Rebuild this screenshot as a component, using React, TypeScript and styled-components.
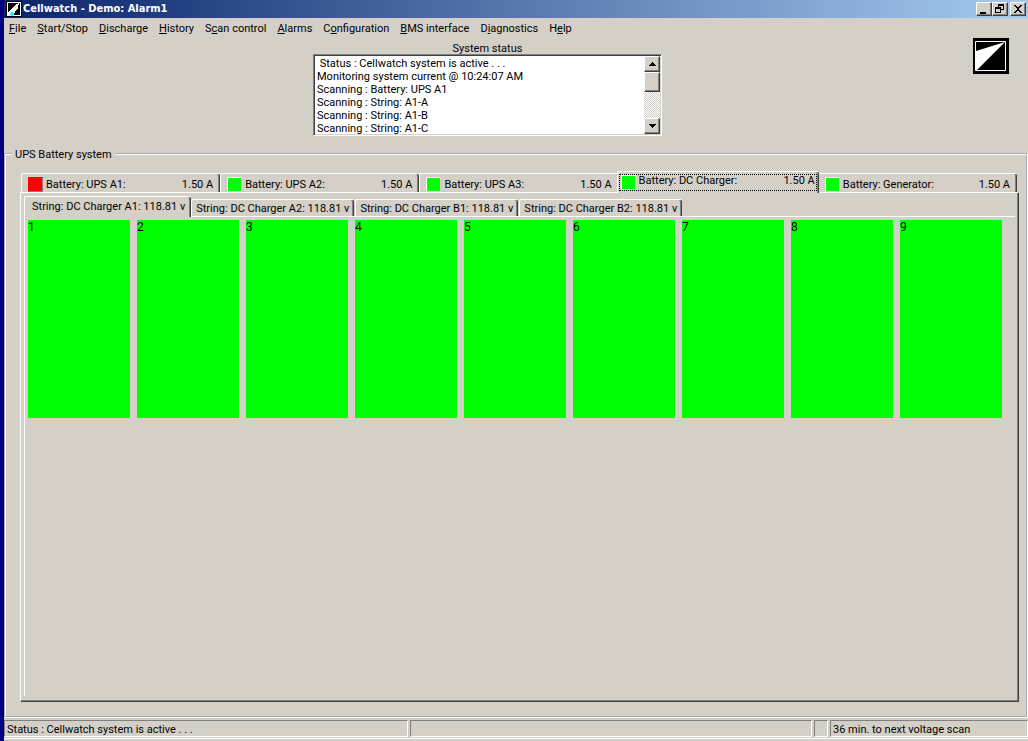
import React, { useState } from "react";
import styled, { createGlobalStyle, css } from "styled-components";

const face = "#d4d0c8";
const shadow = "#808080";
const dark = "#404040";
const titleFont = `"DejaVu Sans Condensed", Tahoma, sans-serif`;
const formFont = `Roboto, Arial, sans-serif`;

const GlobalStyle = createGlobalStyle`
  *, *::before, *::after { box-sizing: border-box; }
  body { margin: 0; background: ${face}; }
  button, textarea { font: inherit; color: inherit; margin: 0; padding: 0; border: 0; border-radius: 0; }
`;

const Frame = styled.div`
  min-height: 100vh;
  display: flex;
  flex-direction: column;
  border-left: 4px solid #000080;
  background: ${face};
  color: #000;
  font: 11px/13px ${formFont};
`;

const TitleBar = styled.header`
  display: flex;
  align-items: center;
  height: 18px;
  padding: 0 2px;
  background: linear-gradient(to right, #0a246a, #a6caf0);
`;

const Title = styled.h1`
  flex: 1;
  margin: 0 0 0 1px;
  color: #fff;
  font: bold 11px/16px ${titleFont};
`;

const raised = css`
  background: ${face};
  border: 1px solid;
  border-color: #fff ${dark} ${dark} #fff;
  box-shadow: inset -1px -1px ${shadow};
`;

const CaptionButton = styled.button<{ $apart?: boolean }>`
  ${raised}
  display: flex;
  width: 16px;
  height: 14px;
  margin-left: ${(p) => (p.$apart ? 2 : 0)}px;
`;

const MenuBar = styled.nav`
  display: flex;
  flex-wrap: wrap;
  gap: 11px;
  min-height: 20px;
  padding: 4px 5px 3px;
`;

const MenuItem = styled.button`
  background: none;
  white-space: nowrap;
`;

const Overview = styled.section`
  display: grid;
  grid-template-columns: 309px minmax(0, 349px) 1fr;
  min-height: 108px;
`;

const StatusField = styled.div`
  grid-column: 2;
  padding-top: 4px;
`;

const StatusLabel = styled.label`
  display: block;
  height: 12px;
  line-height: 14px;
  text-align: center;
`;

const ListBox = styled.div`
  display: flex;
  height: 82px;
  background: #fff;
  border: 1px solid;
  border-color: ${shadow} #fff #fff ${shadow};
  box-shadow: inset 1px 1px ${dark}, inset -1px -1px ${face};
  padding: 1px;
`;

const Log = styled.textarea`
  flex: 1;
  min-width: 0;
  padding: 1px 2px 0;
  background: transparent;
  line-height: 13px;
  resize: none;
  overflow: hidden;
  outline: none;
  white-space: pre;
`;

const ScrollBar = styled.div`
  display: flex;
  flex-direction: column;
  width: 16px;
  background: repeating-conic-gradient(#fff 0 25%, ${face} 0 50%) 0 0 / 2px 2px;
`;

const ScrollButton = styled.button`
  ${raised}
  display: flex;
  height: 16px;
`;

const Thumb = styled.div`
  ${raised}
  height: 20px;
  margin-bottom: auto;
`;

const Brand = styled.div`
  display: flex;
  justify-content: flex-end;
  padding-right: 19px;
`;

const GroupBox = styled.fieldset`
  min-width: 0;
  margin: 0;
  padding: 10px 7px 14px 14px;
  border: 2px groove #fff;
`;

const Legend = styled.legend`
  margin-left: -8px;
  padding: 2px 3px 0;
`;

const BatteryTabs = styled.div`
  display: grid;
  grid-template-columns: repeat(5, minmax(0, 1fr));
  align-items: end;
  padding: 0 2px 0 1px;
  height: 21px;
`;

const tabEdge = css`
  border: solid #fff;
  border-width: 1px 0 0 1px;
  border-radius: 2px 2px 0 0;
  box-shadow: inset -1px 0 ${dark}, inset -2px 0 ${shadow};
  background: ${face};
  white-space: nowrap;
`;

const BatteryTab = styled.button<{ $active: boolean }>`
  ${tabEdge}
  display: flex;
  align-items: center;
  height: 19px;
  padding: 2px 7px 0 6px;
  ${(p) =>
    p.$active &&
    css`
      position: relative;
      z-index: 1;
      height: 22px;
      margin: 0 -1px -1px -2px;
      padding: 2px 2px 2px 1px;
    `}
`;

const TabFace = styled.span<{ $active: boolean }>`
  flex: 1;
  display: flex;
  align-items: center;
  ${(p) =>
    p.$active &&
    css`
      height: 17px;
      padding: 0 1px;
      border: 1px dotted #000;
    `}
`;

const Lamp = styled.span<{ $alarm?: boolean }>`
  flex: none;
  width: 15px;
  height: 15px;
  margin-right: 3px;
  border: 1px solid;
  border-color: ${(p) => (p.$alarm ? `red ${shadow} ${shadow} red` : `#fff ${face} ${face} #fff`)};
  background: ${(p) => (p.$alarm ? "#f00" : "#0f0")};
`;

const TabText = styled.span<{ $raised: boolean; $end?: boolean }>`
  margin-left: ${(p) => (p.$end ? "auto" : "0")};
  padding-bottom: ${(p) => (p.$raised ? 4 : 0)}px;
`;

const BatteryPanel = styled.div`
  display: flex;
  flex-direction: column;
  min-height: calc(100vh - 231px);
  padding: 3px 3px 5px;
  border: 1px solid;
  border-color: #fff ${dark} ${dark} #fff;
  box-shadow: inset -1px -1px ${shadow};
`;

const StringTabs = styled.div`
  display: flex;
  align-items: flex-end;
  height: 21px;
  border-left: 1px solid #fff;
  box-shadow: inset 0 -1px #fff;
`;

const StringTab = styled.button<{ $active: boolean }>`
  ${tabEdge}
  height: 17px;
  margin: 0 1px 1px 0;
  padding: 1px 5px 0 4px;
  ${(p) =>
    p.$active &&
    css`
      height: 21px;
      margin: 0 0 0 -1px;
      padding: 0 6px 2px 7px;
    `}
`;

const Cells = styled.div`
  flex: 1;
  display: grid;
  grid-template-columns: repeat(9, 1fr);
  grid-auto-rows: 198px;
  gap: 7px;
  padding: 3px 13px 0 3px;
  border-left: 1px solid #fff;
`;

const Cell = styled.button`
  display: flex;
  background: #0f0;
  font-size: 12px;
  line-height: 14px;
`;

const StatusBar = styled.footer`
  display: grid;
  grid-template-columns: 404fr 402fr 14px 198fr;
  gap: 2px;
  height: 23px;
  padding: 2px 0 4px;
  box-shadow: inset 0 -2px ${face}, inset 0 -3px #fff;
`;

const StatusPane = styled.div`
  min-width: 0;
  padding: 2px 2px 0;
  border: 1px solid;
  border-color: ${shadow} #fff #fff ${shadow};
  white-space: nowrap;
  overflow: hidden;
`;

const Logo = ({ size }: { size: number }) => (
  <svg width={size} height={size} viewBox="0 0 36 36" aria-hidden="true">
    <path fill="#000" d="M0 0h36v36H0z" />
    <path fill="none" stroke="#fff" d="M2.500 3.500h30v29h-30z" />
    <path fill="#fff" d="M3 13 32 4 4 32H3z" />
  </svg>
);

const AppIcon = () => (
  <svg width="16" height="16" viewBox="0 0 16 16" aria-hidden="true" shapeRendering="crispEdges">
    <path fill="#000" d="M0 0h16v16H0z" />
    <path fill="none" stroke="#fff" d="M1.500 1.500h13v13h-13z" />
    <path fill="#fff" d="M2 14v-3l7-7 4-2-1 5-5 7z" />
    <path fill="#0ff" d="M5 11h2v1h1v2H7v1H5v-1H4v-2h1z" />
  </svg>
);

const glyphs = {
  minimize: "M3 9h6v2H3z",
  restore: "M5 1h6v6H8v3H2V4h3zM6 3v1h2v2h2V3zM3 6v3h4V6z",
  close: "M3 2h2v1h1v1h2V3h1V2h2v1h-1v1H9v1H8v2h1v1h1v1h1v1H9V9H8V8H6v1H5v1H3V9h1V8h1V7h1V5H5V4H4V3H3z",
  up: "M7 5h1v1h1v1h1v1h1v1H4V8h1V7h1V6h1z",
  down: "M4 5h7v1h-1v1H9v1H8v1H7V8H6V7H5V6H4z",
};

const Glyph = ({ name }: { name: keyof typeof glyphs }) => (
  <svg width="14" height="14" viewBox="0 0 14 14" aria-hidden="true" shapeRendering="crispEdges">
    <path fillRule="evenodd" d={glyphs[name]} />
  </svg>
);

// Each entry is [text before the access key, the access key, the rest].
const menus = [
  ["", "F", "ile"],
  ["", "S", "tart/Stop"],
  ["", "D", "ischarge"],
  ["", "H", "istory"],
  ["S", "c", "an control"],
  ["", "A", "larms"],
  ["C", "o", "nfiguration"],
  ["", "B", "MS interface"],
  ["D", "i", "agnostics"],
  ["H", "e", "lp"],
];

const batteries = ["UPS A1", "UPS A2", "UPS A3", "DC Charger", "Generator"];
const strings = ["A1", "A2", "B1", "B2"];
const log = [
  " Status : Cellwatch system is active . . .",
  "Monitoring system current @ 10:24:07 AM",
  "Scanning : Battery: UPS A1",
  "Scanning : String: A1-A",
  "Scanning : String: A1-B",
  "Scanning : String: A1-C",
].join("\n");

export default function App() {
  const [battery, setBattery] = useState(3);
  const [string, setString] = useState(0);

  return (
    <Frame>
      <GlobalStyle />
      <TitleBar>
        <AppIcon />
        <Title>Cellwatch - Demo: Alarm1</Title>
        <CaptionButton aria-label="Minimize"><Glyph name="minimize" /></CaptionButton>
        <CaptionButton aria-label="Restore"><Glyph name="restore" /></CaptionButton>
        <CaptionButton $apart aria-label="Close"><Glyph name="close" /></CaptionButton>
      </TitleBar>
      <MenuBar>
        {menus.map(([before, key, rest]) => (
          <MenuItem key={before + key + rest}>{before}<u>{key}</u>{rest}</MenuItem>
        ))}
      </MenuBar>
      <Overview>
        <StatusField>
          <StatusLabel htmlFor="log">System status</StatusLabel>
          <ListBox>
            <Log id="log" readOnly value={log} />
            <ScrollBar>
              <ScrollButton aria-label="Scroll up"><Glyph name="up" /></ScrollButton>
              <Thumb />
              <ScrollButton aria-label="Scroll down"><Glyph name="down" /></ScrollButton>
            </ScrollBar>
          </ListBox>
        </StatusField>
        <Brand><Logo size={36} /></Brand>
      </Overview>
      <GroupBox>
        <Legend>UPS Battery system</Legend>
        <BatteryTabs role="tablist" aria-label="Batteries">
          {batteries.map((name, i) => {
            const active = i === battery;
            return (
              <BatteryTab key={name} role="tab" aria-selected={active} $active={active} onClick={() => setBattery(i)}>
                <TabFace $active={active}>
                  <Lamp $alarm={i === 0} />
                  <TabText $raised={active}>Battery: {name}:</TabText>
                  <TabText $raised={active} $end>1.50 A</TabText>
                </TabFace>
              </BatteryTab>
            );
          })}
        </BatteryTabs>
        <BatteryPanel role="tabpanel">
          <StringTabs role="tablist" aria-label="Strings">
            {strings.map((name, i) => (
              <StringTab key={name} role="tab" aria-selected={i === string} $active={i === string} onClick={() => setString(i)}>
                String: {batteries[battery]} {name}: 118.81 v
              </StringTab>
            ))}
          </StringTabs>
          <Cells>
            {Array.from({ length: 9 }, (_, i) => (
              <Cell key={i}>{i + 1}</Cell>
            ))}
          </Cells>
        </BatteryPanel>
      </GroupBox>
      <StatusBar>
        <StatusPane>Status : Cellwatch system is active . . .</StatusPane>
        <StatusPane />
        <StatusPane />
        <StatusPane>36 min. to next voltage scan</StatusPane>
      </StatusBar>
    </Frame>
  );
}
